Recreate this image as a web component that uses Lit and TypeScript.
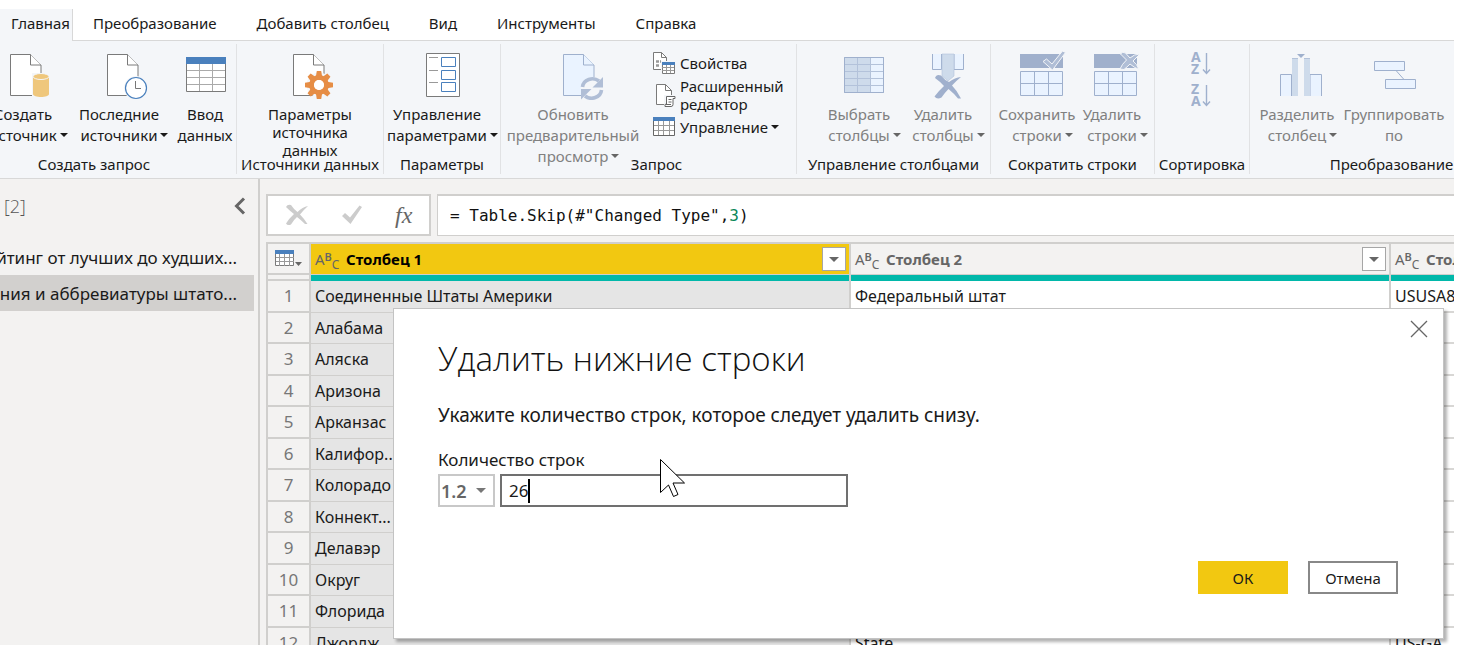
import { LitElement, html, svg, css, nothing } from "lit";
import { customElement, property, state } from "lit/decorators.js";
import { classMap } from "lit/directives/class-map.js";

const page = (x: number, stroke = "#7a7a7a", fill = "#fff") => svg`
  <path d="M${x + 0.5} 6.5h20l10.500 10.500v30.500h-30.500z" fill=${fill} stroke=${stroke}/>
  <path d="M${x + 20.5} 6.500v10.500h10.500" fill=${fill} stroke=${stroke}/>`;

const gear = () => {
  const teeth = [0, 45, 90, 135, 180, 225, 270, 315];
  return svg`<g transform="translate(41 37)">
    <circle r="12.500" fill="#f4f6f9"/>
    ${teeth.map((a) => svg`<path d="M-3.200 -8l1 -6h4.400l1 6z" fill="#e68d45" transform="rotate(${a})"/>`)}
    <circle r="7.400" fill="none" stroke="#e68d45" stroke-width="5"/>
    <circle r="5" fill="#fff"/></g>`;
};

const icons: Record<string, unknown> = {
  source: svg`${page(19)}
    <path d="M41 25h18v26h-18z" fill="#f4f6f9"/>
    <path d="M42 29v17c0 4 16 4 16 0v-17z" fill="#efc77c"/>
    <ellipse cx="50" cy="28.500" rx="8" ry="3" fill="#efc77c" stroke="#f4f6f9" stroke-width="1"/>`,
  recent: svg`${page(20)}
    <circle cx="49" cy="40" r="12" fill="#f4f6f9"/>
    <circle cx="49" cy="40" r="10.500" fill="#fff" stroke="#4a80bd" stroke-width="1.200"/>
    <path d="M48.500 33v7.500h5.500" fill="none" stroke="#777"/>`,
  table: svg`<path d="M13.500 9.500h39v34h-39z" fill="#fff" stroke="#7a7a7a"/>
    <path d="M26.500 15v28M39.500 15v28M14 22.500h38M14 29.500h38M14 36.500h38" stroke="#aaa" fill="none"/>
    <path d="M13 9h40v7h-40z" fill="#4a80bd"/>`,
  params: svg`${page(15)}${gear()}`,
  manage: svg`<path d="M21.500 5.500h33v43h-33z" fill="#fff" stroke="#7a7a7a"/>
    <path d="M24 9.500h9M24 22.500h9M24 34.500h9" stroke="#999"/>
    <path d="M36.500 9.500h14v9h-14zM36.500 22.500h14v9h-14zM36.500 34.500h14v9h-14z" fill="#fff" stroke="#4a80bd"/>`,
  refresh: svg`${page(22, "#9fb0cd", "#eaf3ff")}
    <circle cx="51" cy="40" r="11" fill="#f4f6f9"/>
    <path d="M41.500 39a10 9 0 0 1 16.500 -6" fill="none" stroke="#b0bed6" stroke-width="3.600"/>
    <path d="M62 29v10.500h-10.500z" fill="#b0bed6"/>
    <path d="M60.500 42a10 9 0 0 1 -16.500 6" fill="none" stroke="#b0bed6" stroke-width="3.600"/>
    <path d="M40 51.500v-10.500h10.500z" fill="#b0bed6"/>`,
  choose: svg`<path d="M17.500 9.500h39v35h-39z" fill="#eaf3ff" stroke="#9fb0cd"/>
    <path d="M18 10h26v34h-26z" fill="#cedbeb"/>
    <path d="M30.500 10v34M43.500 10v34M18 16.500h38M18 23.500h38M18 30.500h38M18 37.500h38" stroke="#b3c2da"/>
    <path d="M17.500 9.500h39v35h-39z" fill="none" stroke="#9fb0cd"/>`,
  dropcol: svg`<path d="M21.500 6v15.500h9v-15.500M43 6v15.500h9.500v-15.500" fill="#eaf3ff" stroke="#9fb0cd"/>
    <path d="M31 6h12v22l-6 5l-6 -5z" fill="#cedbeb" stroke="#b3c2da" stroke-width=".6"/>
    <path d="M25 29.500q13 6 23.500 20.500M49.500 29.500q-14 7 -23.500 19.500" fill="none" stroke="#f4f6f9" stroke-width="6"/>
    <path d="M24 30q1.500 -4.500 6 -2.500q4 5 8 6.500q6 -4.500 12 -5q-5 4 -9 8.500q5 5 9 13h-3q-4 -5 -9.500 -9.500q-4 4 -7 8.500q-4.500 2.500 -7 -1q4 -5.500 9.500 -10.500q-4 -4.500 -9 -8z" fill="#a0b0cd"/>`,
  keep: svg`<path d="M15 6h43v14h-43z" fill="#a0b0cc"/>
    <path d="M15.500 23.500h42v24h-42z" fill="#eaf3ff" stroke="#9fb0cd"/>
    <path d="M29.500 24v23M43.500 24v23M16 35.500h41" stroke="#9fb0cd"/>
    <path d="M38 13.500l3.500 -2.500l5.500 5l10.500 -13l3 1.500l-13 17.500z" fill="#b0bed6" stroke="#f4f6f9"/>`,
  droprow: svg`<path d="M14 6h43v14h-43z" fill="#a0b0cc"/>
    <path d="M14.500 23.500h42v24h-42z" fill="#eaf3ff" stroke="#9fb0cd"/>
    <path d="M28.500 24v23M42.500 24v23M15 35.500h41" stroke="#9fb0cd"/>
    <path d="M40.500 6q2 -3 5 -1l4.500 5q4 -4 10 -4l-7 7q4 3 6 8.500q-5 -2 -9 -5.500q-3 3 -6 5.500l-4 -.5q2 -5 6.500 -9z" fill="#b0bed6" stroke="#f4f6f9"/>`,
  split: svg`<path d="M15.500 48v-21.500h11v21.500M45 48v-21.500h11.500v21.500" fill="#eaf3ff" stroke="#9fb0cd"/>
    <path d="M27 48v-38h6v38zM39 48v-38h6v38z" fill="#cedbeb"/>
    <path d="M27 10.500h6M39 10.500h6" stroke="#b3c2da"/>
    <path d="M32 6h8l-4 4z" fill="#9fb0cd"/>`,
  group: svg`<path d="M12.500 13.500h30v9h-30zM23.500 31.500h30v9h-30z" fill="#eaf3ff" stroke="#9fb0cd"/>
    <path d="M34 22.500l8 9" stroke="#9fb0cd"/>`,
};

const smallIcons: Record<string, unknown> = {
  props: svg`<path d="M.5 1.500h8l5 5v12h-13z" fill="#fff" stroke="#7a7a7a"/><path d="M8.500 1.500v5h5" fill="none" stroke="#7a7a7a"/>
    <path d="M3 10.500h3M3 14.500h3M7 10.500h1" stroke="#999" stroke-width="2.500"/>
    <path d="M8 10h15v13h-15z" fill="#f4f6f9"/><path d="M9.500 11.500h12v11h-12z" fill="#fff" stroke="#7a7a7a"/>
    <path d="M13.500 12v10M17.500 12v10M9 16.500h12M9 19.500h12" stroke="#999"/><path d="M9 11h13v3h-13z" fill="#4a80bd"/>`,
  editor: svg`<path d="M3.500 1.500h9l6 6v14h-15z" fill="#fff" stroke="#7a7a7a"/><path d="M12.500 1.500v6h6" fill="none" stroke="#7a7a7a"/>
    <path d="M11 12h12v12h-12z" fill="#f4f6f9"/>
    <path d="M13.500 21v-7.500h8.500v2h-2v6q0 2 -2 2h-6v-2z" fill="#fff" stroke="#666"/><path d="M15.500 16.500h3M15.500 19h3M13 21.500h5" stroke="#666"/>`,
  table: svg`<path d="M.5 2.500h21v18h-21z" fill="#fff" stroke="#666"/>
    <path d="M5.500 6v14M10.500 6v14M16.500 6v14M1 10.500h20M1 15.500h20" stroke="#999"/><path d="M0 2h22v4h-22z" fill="#4a80bd"/>`,
};

const sortIcon = (a: string, b: string) => html`
  <svg class="sort" width="22" height="26" viewBox="0 0 22 26" role="img" aria-label="${a}${b}">
    <text x="0" y="11" class="letter">${a}</text>
    <text x="0" y="23" class="letter">${b}</text>
    <path d="M15.500 2v20M12 18.500l3.500 4l3.500 -4" fill="none" stroke="#9fb0cd" stroke-width="1.400"/>
  </svg>`;

@customElement("ribbon-button")
class RibbonButton extends LitElement {
  @property() icon = "";
  @property({ type: Array }) lines: string[] = [];
  @property({ type: Boolean }) menu = false;
  @property({ type: Boolean }) tight = false;
  @property({ type: Boolean }) disabled = false;

  static styles = css`
    :host { display: flex; justify-content: center; }
    button {
      display: flex; flex-direction: column; align-items: center;
      width: 100%; border: 0; padding: 0; background: none;
      font: 15px/21px "Noto Sans", "Open Sans", sans-serif; color: #1a1a1a;
    }
    button:disabled { color: #808080; }
    svg { flex: none; }
    .text { display: flex; flex-direction: column; align-items: center; padding-top: 4px; white-space: nowrap; }
    .tight { line-height: 18px; padding-top: 5px; }
    .caret {
      display: inline-block; vertical-align: 4px; margin: 0 -11px 0 3px;
      border: solid transparent; border-width: 4px 4px 0; border-top-color: #1a1a1a;
    }
    button:disabled .caret { border-top-color: #666; }
  `;

  render() {
    return html`<button ?disabled=${this.disabled}>
      <svg width="64" height="52" viewBox="0 0 64 52" aria-hidden="true">${icons[this.icon]}</svg>
      <span class=${classMap({ text: true, tight: this.tight })}>
        ${this.lines.map((line, i) => html`<span>${line}${this.menu && i === this.lines.length - 1
          ? html`<i class="caret"></i>` : nothing}</span>`)}
      </span>
    </button>`;
  }
}

@customElement("app-ribbon")
class AppRibbon extends LitElement {
  static styles = css`
    :host { display: block; font: 15px/21px "Noto Sans", "Open Sans", sans-serif; color: #1a1a1a; }
    nav { display: flex; box-sizing: border-box; height: 41px; padding-top: 9px; border-bottom: 1px solid #d8d8d8; background: #fff; }
    nav a { color: inherit; text-decoration: none; padding: 4px 20px 0; height: 27px; white-space: nowrap; }
    nav a.active { background: #f4f6f9; border-right: 1px solid #d8d8d8; padding: 4px 2px 1px 11px; }
    .ribbon {
      display: flex; height: 137px; background: #f4f6f9;
      border-bottom: 1px solid #d8d8d8; overflow: hidden;
    }
    .group {
      flex: none; box-sizing: border-box; display: flex; flex-direction: column;
      margin: 3px 0 4px; border-right: 1px solid #e1e2e4;
    }
    .items { flex: 1; min-height: 0; display: flex; padding-top: 4px; }
    .caption { line-height: 20px; text-align: center; white-space: nowrap; }
    .create { width: 285px; margin-left: -48px; }
    .create .items { justify-content: flex-end; }
    .sources { width: 147px; }
    .parameters { width: 117px; }
    .query { width: 296px; }
    .query .caption { padding-left: 16px; }
    .columns { width: 194px; }
    .columns .items { padding-left: 20px; }
    .rows { width: 164px; }
    .sorting { width: 95px; }
    .sorting .items { flex-direction: column; align-items: center; gap: 6px; padding-top: 7px; }
    .transform { width: 284px; }
    .transform .items { padding-left: 4px; }
    .w58 { width: 58px; }
    .w62 { width: 62px; }
    .w82 { width: 82px; }
    .w84 { width: 84px; }
    .w86 { width: 86px; }
    .w92 { width: 92px; }
    .w106 { width: 106px; }
    .w108 { width: 108px; }
    .w110 { width: 110px; }
    .w144 { width: 144px; }
    .w147 { width: 147px; }
    .stack { display: flex; flex-direction: column; padding: 1px 0 0 8px; }
    .stack button, .sorting button {
      display: flex; align-items: center; border: 0; padding: 0; background: none; color: inherit;
      font: 15px/18px "Noto Sans", "Open Sans", sans-serif; text-align: left;
    }
    .stack button { gap: 4px; min-height: 28px; }
    .stack svg { flex: none; }
    .caret { display: inline-block; vertical-align: 4px; margin-left: 3px; border: solid transparent; border-width: 4px 4px 0; border-top-color: #1a1a1a; }
    .letter { font: 700 14px "Noto Sans", "Open Sans", sans-serif; fill: #9fb0cd; }
  `;

  render() {
    const small = (name: string) => html`<svg width="23" height="24" viewBox="0 0 23 24" aria-hidden="true">${smallIcons[name]}</svg>`;
    return html`
      <nav>
        <a href="#" class="active">Главная</a>
        <a href="#">Преобразование</a>
        <a href="#">Добавить столбец</a>
        <a href="#">Вид</a>
        <a href="#">Инструменты</a>
        <a href="#">Справка</a>
      </nav>
      <div class="ribbon">
        <div class="group create">
          <div class="items">
            <ribbon-button class="w82" icon="source" .lines=${["Создать", "источник"]} menu></ribbon-button>
            <ribbon-button class="w110" icon="recent" .lines=${["Последние", "источники"]} menu></ribbon-button>
            <ribbon-button class="w62" icon="table" .lines=${["Ввод", "данных"]}></ribbon-button>
          </div>
          <div class="caption">Создать запрос</div>
        </div>
        <div class="group sources">
          <div class="items">
            <ribbon-button class="w147" icon="params" .lines=${["Параметры", "источника", "данных"]} tight></ribbon-button>
          </div>
          <div class="caption">Источники данных</div>
        </div>
        <div class="group parameters">
          <div class="items">
            <ribbon-button class="w106" icon="manage" .lines=${["Управление", "параметрами"]} menu></ribbon-button>
          </div>
          <div class="caption">Параметры</div>
        </div>
        <div class="group query">
          <div class="items">
            <ribbon-button class="w144" icon="refresh" .lines=${["Обновить", "предварительный", "просмотр"]} menu disabled></ribbon-button>
            <div class="stack">
              <button>${small("props")}<span>Свойства</span></button>
              <button>${small("editor")}<span>Расширенный<br>редактор</span></button>
              <button>${small("table")}<span>Управление<i class="caret"></i></span></button>
            </div>
          </div>
          <div class="caption">Запрос</div>
        </div>
        <div class="group columns">
          <div class="items">
            <ribbon-button class="w84" icon="choose" .lines=${["Выбрать", "столбцы"]} menu disabled></ribbon-button>
            <ribbon-button class="w84" icon="dropcol" .lines=${["Удалить", "столбцы"]} menu disabled></ribbon-button>
          </div>
          <div class="caption">Управление столбцами</div>
        </div>
        <div class="group rows">
          <div class="items">
            <ribbon-button class="w92" icon="keep" .lines=${["Сохранить", "строки"]} menu disabled></ribbon-button>
            <ribbon-button class="w58" icon="droprow" .lines=${["Удалить", "строки"]} menu disabled></ribbon-button>
          </div>
          <div class="caption">Сократить строки</div>
        </div>
        <div class="group sorting">
          <div class="items">
            <button disabled>${sortIcon("A", "Z")}</button>
            <button disabled>${sortIcon("Z", "A")}</button>
          </div>
          <div class="caption">Сортировка</div>
        </div>
        <div class="group transform">
          <div class="items">
            <ribbon-button class="w86" icon="split" .lines=${["Разделить", "столбец"]} menu disabled></ribbon-button>
            <ribbon-button class="w108" icon="group" .lines=${["Группировать", "по"]} disabled></ribbon-button>
          </div>
          <div class="caption">Преобразование</div>
        </div>
      </div>`;
  }
}

@customElement("data-grid")
class DataGrid extends LitElement {
  static styles = css`
    :host { display: block; overflow: hidden; font: 15px/20px "Noto Sans", "Open Sans", sans-serif; color: #1a1a1a; }
    table {
      table-layout: fixed; width: 1665px; border-spacing: 0; background: #fff;
      border: solid #d0cfcd; border-width: 2px 0 0 2px;
    }
    .num { width: 43px; }
    .data { width: 540px; }
    th, td { box-sizing: border-box; padding: 0; border-right: 2px solid #d0cfcd; text-align: left; white-space: nowrap; }
    th { height: 31px; border-bottom: 1px solid #d0cfcd; background: #f3f2f1; color: #666; }
    th:first-child, tbody th { border-bottom-width: 2px; }
    .bar td { height: 6px; background: #01b8aa; }
    .bar td:first-child { background: #f3f2f1; border-bottom: 2px solid #d0cfcd; }
    .head { display: flex; align-items: center; padding: 0 3px 0 4px; }
    .name { flex: 1; padding-left: 8px; }
    .head.picked, th.picked { background: #f2c811; color: #000; }
    .abc { width: 23px; font-weight: 400; font-size: 15px; line-height: 20px; color: #666; }
    .abc sup, .abc sub { font-size: 12px; line-height: 0; }
    .abc sup { vertical-align: 4px; font-size: 11px; font-weight: 600; }
    .abc sub { vertical-align: -4px; }
    .filter { display: grid; place-items: center; width: 24px; height: 24px; padding: 0; border: 1px solid #a6a6a6; background: #fff; }
    .filter::after { content: ""; border: solid transparent; border-width: 5px 5px 0; border-top-color: #666; }
    .corner { display: flex; align-items: center; border: 0; background: none; padding: 0 0 0 7px; }
    tbody th { text-align: center; font-weight: 400; font-size: 17px; color: #777; }
    tbody th, tbody td { height: 31px; }
    tbody tr:nth-child(odd) > * { height: 32px; }
    tbody td { border-bottom: 2px solid #d8d7d5; padding-left: 4px; font-size: 16px; }
    tbody td.picked { background: #e5e5e5; border-bottom: 1px solid #d0cfcd; padding-bottom: 1px; }
  `;

  rows = [
    ["Соединенные Штаты Америки", "Федеральный штат", "USUSA840"],
    ["Алабама", "State", "US-AL"], ["Аляска", "State", "US-AK"], ["Аризона", "State", "US-AZ"],
    ["Арканзас", "State", "US-AR"], ["Калифор...", "State", "US-CA"], ["Колорадо", "State", "US-CO"],
    ["Коннект...", "State", "US-CT"], ["Делавэр", "State", "US-DE"], ["Округ", "State", "US-DC"],
    ["Флорида", "State", "US-FL"], ["Джордж...", "State", "US-GA"],
  ];

  render() {
    return html`<table>
      <colgroup><col class="num"><col class="data"><col class="data"><col class="data"></colgroup>
      <thead>
        <tr>
          <th><button class="corner" aria-label="Таблица">
            <svg width="28" height="20" viewBox="0 0 28 20">
              <path d="M.5 1.500h18v15h-18z" fill="#fff" stroke="#7a7a7a"/>
              <path d="M4.500 5v12M9.500 5v12M14.500 5v12M1 8.500h18M1 12.500h18" stroke="#999"/>
              <path d="M0 1h19v4h-19z" fill="#4a80bd"/>
              <path d="M20 13h7l-3.500 4z" fill="#666"/>
            </svg></button></th>
          ${["Столбец 1", "Столбец 2", "Столбец 3"].map((name, i) => html`
            <th class=${classMap({ picked: i === 0 })}>
              <div class="head">
                <span class="abc">A<sup>B</sup><sub>C</sub></span>
                <span class="name">${name}</span>
                <button class="filter" aria-label="Фильтр"></button>
              </div>
            </th>`)}
        </tr>
        <tr class="bar"><td></td><td></td><td></td><td></td></tr>
      </thead>
      <tbody>
        ${this.rows.map((row, i) => html`<tr><th>${i + 1}</th>
          ${row.map((cell, j) => html`<td class=${classMap({ picked: j === 0 })}>${cell}</td>`)}</tr>`)}
      </tbody>
    </table>`;
  }
}

@customElement("remove-rows-dialog")
class RemoveRowsDialog extends LitElement {
  @state() count = "26";

  static styles = css`
    :host {
      box-sizing: border-box; display: flex; flex-direction: column;
      padding: 24px 45px 44px 44px; background: #fff; border: 1px solid #c3c3c3;
      box-shadow: 3px 3px 3px rgba(0, 0, 0, .3);
      font: 17px/22px "Noto Sans", "Open Sans", sans-serif; color: #1a1a1a;
    }
    h2 { margin: 0; font: 300 33px/52px "Open Sans", "Noto Sans", sans-serif; color: #111; }
    p { margin: 17px 0 0; font-size: 19px; line-height: 26px; }
    label { margin-top: 21px; }
    .fields { display: flex; gap: 5px; margin-top: 3px; }
    .kind { display: flex; position: relative; width: 57px; }
    .kind::after {
      content: ""; position: absolute; right: 9px; top: 14px; pointer-events: none;
      border: solid transparent; border-width: 5px 5px 0; border-top-color: #777;
    }
    select {
      appearance: none; width: 100%; height: 33px; border: 2px solid #c8c8c8; border-radius: 0;
      background: #fff; padding: 0 0 0 1px; color: #666; font: 600 18px/26px "Noto Sans", "Open Sans", sans-serif;
    }
    .entry { position: relative; display: flex; width: 348px; }
    input {
      box-sizing: border-box; width: 100%; height: 33px; border: 2px solid #707070; background: #fff;
      padding: 0 7px; font: 17px/26px "Noto Sans", "Open Sans", sans-serif; color: #1a1a1a; outline: 0;
    }
    .beam { position: absolute; left: 28px; top: 5px; width: 2px; height: 24px; background: #000; }
    .actions { display: flex; justify-content: flex-end; gap: 20px; margin-top: auto; }
    .actions button {
      width: 90px; height: 33px; padding: 0; border: 2px solid #888; background: #fff;
      font: 15px/20px "Noto Sans", "Open Sans", sans-serif; color: #1a1a1a;
    }
    .actions .primary { border-color: #f2c811; background: #f2c811; }
    .close { position: absolute; top: 11px; right: 15px; padding: 0; border: 0; background: none; display: flex; }
  `;

  render() {
    return html`
      <button class="close" aria-label="Закрыть">
        <svg width="18" height="18" viewBox="0 0 18 18"><path d="M1 1l16 16M17 1l-16 16" stroke="#666" stroke-width="1.300"/></svg>
      </button>
      <h2>Удалить нижние строки</h2>
      <p>Укажите количество строк, которое следует удалить снизу.</p>
      <label for="count">Количество строк</label>
      <div class="fields">
        <div class="kind"><select aria-label="Тип значения"><option>1.2</option></select></div>
        <div class="entry">
          <input id="count" .value=${this.count} @input=${(e: Event) => (this.count = (e.target as HTMLInputElement).value)}>
          <span class="beam"></span>
        </div>
      </div>
      <div class="actions"><button class="primary">ОК</button><button>Отмена</button></div>`;
  }
}

@customElement("app-root")
class AppRoot extends LitElement {
  static styles = css`
    :host {
      display: flex; flex-direction: column; position: relative; box-sizing: border-box;
      height: 100vh; padding: 0 4px 2px 0; overflow: hidden; background: #fff;
      font: 17px/24px "Noto Sans", "Open Sans", sans-serif; color: #1a1a1a;
    }
    .work { flex: 1; min-height: 0; display: grid; grid-template-columns: 260px minmax(0, 1fr); background: #f3f2f1; }
    aside { border-right: 2px solid #d0cfcd; overflow: hidden; }
    .title { display: flex; justify-content: space-between; align-items: center; padding: 14px 12px 0 4px; height: 26px; font: 300 18px/26px "Open Sans", "Noto Sans", sans-serif; color: #555; }
    .title button { border: 0; background: none; padding: 0; display: flex; }
    ul { list-style: none; margin: 20px 4px 0 0; padding: 0; }
    li { display: flex; justify-content: flex-end; box-sizing: border-box; height: 36px; padding: 7px 17px 0 0; white-space: nowrap; overflow: hidden; }
    li a { color: inherit; text-decoration: none; }
    li.current { background: #d2d0ce; }
    main { display: flex; flex-direction: column; padding: 15px 0 0 6px; min-height: 0; overflow: hidden; }
    .formula { display: flex; gap: 6px; margin-bottom: 6px; }
    .tools { flex: none; display: flex; align-items: center; box-sizing: border-box; width: 165px; height: 42px; gap: 33px; padding-left: 17px; border: 2px solid #d0cfcd; background: #fff; }
    .tools button { border: 0; padding: 0; background: none; display: flex; }
    .tools .fx { font: italic 24px/24px "Liberation Serif", serif; color: #666; }
    .code { flex: 1; box-sizing: border-box; height: 42px; padding: 7px 12px; border: 1px solid #d0cfcd; border-top-width: 2px; border-right: 0; background: #fff; font: 16px/26px "DejaVu Sans Mono", "Liberation Mono", monospace; color: #111; white-space: pre; outline: 0; }
    .digit { color: #098658; }
    data-grid { flex: 1; min-height: 0; }
    remove-rows-dialog { position: absolute; left: 393px; right: 14px; top: 308px; bottom: 8px; }
    .pointer { position: absolute; left: 659px; top: 458px; pointer-events: none; }
  `;

  render() {
    return html`
      <app-ribbon></app-ribbon>
      <div class="work">
        <aside>
          <div class="title"><span>[2]</span>
            <button aria-label="Свернуть"><svg width="14" height="18" viewBox="0 0 14 18"><path d="M12 1.500l-7.500 7.500l7.500 7.500" fill="none" stroke="#666" stroke-width="3"/></svg></button>
          </div>
          <ul>
            <li><a href="#">Рейтинг от лучших до худших...</a></li>
            <li class="current"><a href="#">Названия и аббревиатуры штато...</a></li>
          </ul>
        </aside>
        <main>
          <div class="formula">
            <div class="tools">
              <button aria-label="Отмена"><svg width="24" height="22" viewBox="0 0 24 22"><path d="M1 3q1.500 -3 5 -2q3 4.500 6.500 7q5 -5 10.500 -6q-4.500 4 -8 8.500q4 4 7.500 9.500h-2.500q-4 -4 -8 -7q-3.500 3 -6 7.500q-3.500 1.500 -5 -1q3 -5 8 -9.500q-4 -3 -8 -7z" fill="#ccc"/></svg></button>
              <button aria-label="Применить"><svg width="20" height="20" viewBox="0 0 20 20"><path d="M0 11l3 -3l5 4.500l9.500 -12l2.500 1.500l-11.500 17z" fill="#ccc"/></svg></button>
              <button class="fx" aria-label="Функция">fx</button>
            </div>
            <div class="code" role="textbox" contenteditable="true" spellcheck="false" aria-label="Строка формул">= Table.Skip(#"Changed Type",<span class="digit">3</span>)</div>
          </div>
          <data-grid></data-grid>
        </main>
      </div>
      <remove-rows-dialog role="dialog" aria-label="Удалить нижние строки"></remove-rows-dialog>
      <svg class="pointer" width="28" height="42" viewBox="0 0 28 42" aria-hidden="true">
        <path d="M1.500 1.500v33l8 -7.500l5 11.500l4.500 -2l-5 -11.500h11.500z" fill="#fff" stroke="#000"/>
      </svg>`;
  }
}
